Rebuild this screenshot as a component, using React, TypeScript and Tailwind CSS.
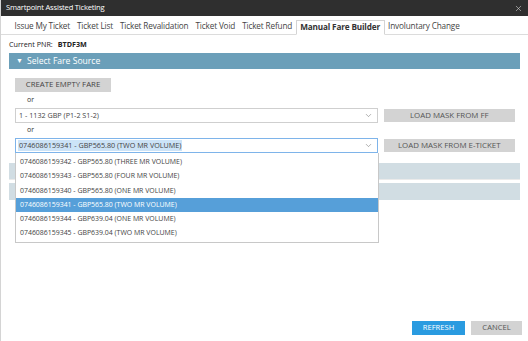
import { ChevronDown, X } from "lucide-react";

const tabs = [
  "Issue My Ticket",
  "Ticket List",
  "Ticket Revalidation",
  "Ticket Void",
  "Ticket Refund",
  "Manual Fare Builder",
  "Involuntary Change",
];

const tickets = [
  "0746086159342 - GBP565.80 (THREE MR VOLUME)",
  "0746086159343 - GBP565.80 (FOUR MR VOLUME)",
  "0746086159340 - GBP565.80 (ONE MR VOLUME)",
  "0746086159341 - GBP565.80 (TWO MR VOLUME)",
  "0746086159344 - GBP639.04 (ONE MR VOLUME)",
  "0746086159345 - GBP639.04 (TWO MR VOLUME)",
];

export default function App() {
  return (
    <div
      className="w-[528px] h-[341px] bg-white flex flex-col border-l border-[#d4d4d4] overflow-hidden text-[#333]"
      style={{ fontFamily: '"Open Sans", "Noto Sans", sans-serif' }}
    >
      {/* title bar */}
      <div className="h-[16px] bg-[#2f2f2f] flex items-center justify-between pl-[5px] pr-[5px] text-white">
        <span className="text-[7.6px] tracking-[-0.2px]">Smartpoint Assisted Ticketing</span>
        <X size={9} strokeWidth={1.5} className="text-[#ddd]" />
      </div>

      {/* tabs */}
      <div className="h-[19px] flex items-end pl-[10px] border-b border-[#dcdcdc]">
        {tabs.map((t) =>
          t === "Manual Fare Builder" ? (
            <div
              key={t}
              className="h-[15px] px-[3.5px] flex items-center text-[8.2px] tracking-[-0.15px] font-bold text-[#333] border border-[#d4d4d4] border-b-white -mb-px bg-white"
            >
              {t}
            </div>
          ) : (
            <div key={t} className="h-[15px] px-[3.5px] flex items-center text-[8.2px] tracking-[-0.15px] text-[#444]">
              {t}
            </div>
          )
        )}
      </div>

      {/* pnr */}
      <div className="h-[18px] flex items-center pl-[8px] text-[7.2px] text-[#222]">
        <span>Current PNR:</span>
        <span className="ml-[5px] font-bold">BTDF3M</span>
      </div>

      <div className="mx-[8px] flex flex-col">
        <div className="h-[16px] bg-[#6b9fb9] flex items-center pl-[7px] text-white text-[8.6px]">
          <span className="text-[7px] mr-[4px]">▼</span>
          Select Fare Source
        </div>

        <div className="pl-[6px] pr-[5px] flex flex-col">
          <button className="mt-[9px] w-[96px] h-[14px] bg-[#d3d3d3] text-[#444] text-[7.8px] flex items-center justify-center">
            CREATE EMPTY FARE
          </button>
          <div className="h-[16px] flex items-center pl-[12px] text-[7px] text-[#333]">or</div>

          <div className="flex items-center gap-[6px]">
            <div className="w-[364px] h-[15px] border border-[#cfcfcf] flex items-center justify-between pl-[3px] pr-[4px] text-[7.2px] text-[#444]">
              <span>1 - 1132 GBP (P1-2 S1-2)</span>
              <ChevronDown size={9} strokeWidth={1.2} className="text-[#555]" />
            </div>
            <button className="w-[132px] h-[13px] bg-[#d3d3d3] text-[#555] text-[7.9px] flex items-center justify-center">
              LOAD MASK FROM FF
            </button>
          </div>

          <div className="h-[15px] flex items-center pl-[12px] text-[7px] text-[#333]">or</div>

          <div className="flex items-center gap-[6px] relative">
            <div className="w-[364px] h-[15px] border border-[#7eb4ea] flex items-center justify-between pl-[2px] pr-[4px] text-[7.2px] text-[#444]">
              <span className="bg-[#cce3f7] px-[1px]">0746086159341 - GBP565.80 (TWO MR VOLUME)</span>
              <ChevronDown size={9} strokeWidth={1.2} className="text-[#555]" />
            </div>
            <button className="w-[132px] h-[13px] bg-[#d3d3d3] text-[#555] text-[7.9px] flex items-center justify-center">
              LOAD MASK FROM E-TICKET
            </button>

            {/* open dropdown list */}
            <div className="absolute left-0 top-[15px] w-[364px] bg-white border border-[#c8c8c8] border-t-0 z-10 flex flex-col pt-[2px] pb-[1px]">
              {tickets.map((t, i) => (
                <div
                  key={t}
                  className={
                    i === 3
                      ? "h-[14.3px] flex items-center pl-[4px] text-[6.95px] bg-[#569fd9] text-white"
                      : "h-[14.3px] flex items-center pl-[4px] text-[6.95px] text-[#444]"
                  }
                >
                  {t}
                </div>
              ))}
            </div>
          </div>
        </div>

        <div className="mt-[10px] h-[17px] bg-[#d1dde3] border-b border-[#eaeaea]"></div>
        <div className="mt-[3px] h-[17px] bg-[#d1dde3]"></div>
      </div>

      <div className="flex-1"></div>

      {/* footer */}
      <div className="flex justify-end gap-[6px] pr-[6px] pb-[6px]">
        <button className="w-[53px] h-[14px] bg-[#2a9be0] text-white text-[7.6px] flex items-center justify-center">
          REFRESH
        </button>
        <button className="w-[51px] h-[14px] bg-[#d3d3d3] text-[#555] text-[7.6px] flex items-center justify-center">
          CANCEL
        </button>
      </div>
    </div>
  );
}
